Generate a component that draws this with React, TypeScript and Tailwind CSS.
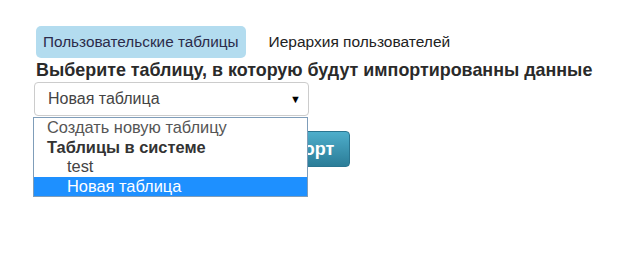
import React from "react";

const OPTIONS = [
  { label: "Создать новую таблицу", kind: "option" },
  { label: "Таблицы в системе", kind: "group" },
  { label: "test", kind: "child" },
  { label: "Новая таблица", kind: "child", selected: true },
];

export default function App() {
  return (
    <div className="h-[257px] w-[640px] bg-white pl-[36px] pt-[26px] font-['Liberation_Sans',Arial,sans-serif] text-[#333]">
      {/* tabs */}
      <div className="flex items-center">
        <div className="flex h-[32px] items-center rounded-[5px] bg-[#b3dcef] px-[7px] text-[15.3px] text-[#2b2b4a]">
          Пользовательские таблицы
        </div>
        <div className="ml-[23px] text-[15.5px] text-[#222]">Иерархия пользователей</div>
      </div>

      <h2 className="mt-[2px] text-[17.9px] font-bold leading-[20px] text-[#2a2a2a]">
        Выберите таблицу, в которую будут импортированны данные
      </h2>

      <div className="relative ml-[-2px] mt-[2px] w-[275px]">
        <div className="flex h-[34px] items-center justify-between rounded-[4px] border border-[#ccc] bg-white pl-[13px] pr-[7px] text-[16px] text-[#444]">
          <span>Новая таблица</span>
          <span className="text-[11px] text-black">▼</span>
        </div>

        <button className="ml-[217px] mt-[15px] h-[36px] w-[99px] rounded-[4px] border border-[#2a7590] bg-gradient-to-b from-[#4eaecb] to-[#2b7d98] text-[18px] font-bold text-white">
          Импорт
        </button>

        {/* open dropdown list */}
        <div className="absolute left-[-1px] top-[35px] w-[275px] border border-[#7f9db9] bg-white text-[16.4px] leading-[19px]">
          {OPTIONS.map((o) => (
            <div
              key={o.label}
              className={
                o.selected
                  ? "h-[19.5px] bg-[#1e90ff] pl-[33px] text-white"
                  : o.kind === "group"
                    ? "h-[19.5px] pl-[13px] font-bold text-[#333]"
                    : o.kind === "child"
                      ? "h-[19.5px] pl-[33px] text-[#444]"
                      : "h-[19.5px] pl-[13px] text-[#555]"
              }
            >
              {o.label}
            </div>
          ))}
        </div>
      </div>
    </div>
  );
}
